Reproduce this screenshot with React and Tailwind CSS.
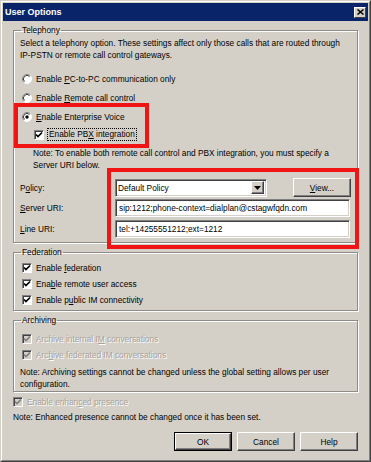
import React from 'react'

function Mn({ t }) {
  const i = t.indexOf('&')
  if (i < 0) return t
  return (
    <>
      {t.slice(0, i)}
      <u className="underline underline-offset-[1px]">{t[i + 1]}</u>
      {t.slice(i + 2)}
    </>
  )
}

function CheckBox({ disabled }) {
  return (
    <span
      className={
        disabled
          ? 'flex w-[10px] h-[10px] shrink-0 items-center justify-center border border-t-[#808080] border-l-[#808080] border-r-white border-b-white bg-[#d4d0c8] shadow-[inset_1px_1px_0_#404040]'
          : 'flex w-[10px] h-[10px] shrink-0 items-center justify-center border border-t-[#808080] border-l-[#808080] border-r-white border-b-white bg-white shadow-[inset_1px_1px_0_#404040]'
      }
    >
      <svg width="8" height="8" viewBox="0 0 8 8">
        <path d="M1 3.5 L3 5.5 L7 1.5" fill="none" stroke={disabled ? '#808080' : '#000'} strokeWidth="1.7" />
      </svg>
    </span>
  )
}

function Radio({ checked }) {
  return (
    <svg width="10" height="10" viewBox="0 0 10 10" className="shrink-0">
      <circle cx="5" cy="5" r="4.5" fill="#fff" />
      <path d="M8.2 1.8 A4.5 4.5 0 0 0 1.8 8.2" fill="none" stroke="#808080" strokeWidth="1" />
      <path d="M7.5 2.5 A3.5 3.5 0 0 0 2.5 7.5" fill="none" stroke="#404040" strokeWidth="1" />
      <path d="M1.8 8.2 A4.5 4.5 0 0 0 8.2 1.8" fill="none" stroke="#fff" strokeWidth="1" />
      {checked && <circle cx="5" cy="5" r="1.7" fill="#000" />}
    </svg>
  )
}

function CheckRow({ label, disabled, className = '' }) {
  return (
    <div className={`flex items-center gap-[4px] h-[16px] ${className}`}>
      <CheckBox disabled={disabled} />
      <span className={disabled ? 'text-[#a6a39c] [text-shadow:1px_1px_0_#fff]' : ''}>
        <Mn t={label} />
      </span>
    </div>
  )
}

function Button({ children, isDefault }) {
  return (
    <button
      className={
        isDefault
          ? 'w-[58px] h-[19px] border border-black bg-[#d4d0c8] p-0'
          : 'w-[58px] h-[19px] border border-t-white border-l-white border-r-[#404040] border-b-[#404040] bg-[#d4d0c8] shadow-[inset_-1px_-1px_0_#808080] p-0'
      }
    >
      {isDefault ? (
        <span className="flex h-full w-full items-center justify-center border border-t-white border-l-white border-r-[#404040] border-b-[#404040] shadow-[inset_-1px_-1px_0_#808080]">
          {children}
        </span>
      ) : (
        children
      )}
    </button>
  )
}

const sunken =
  'border border-t-[#808080] border-l-[#808080] border-r-white border-b-white bg-white shadow-[inset_1px_1px_0_#404040,inset_-1px_-1px_0_#d4d0c8]'

const group =
  'mx-[10px] border border-[#8e8c86] shadow-[inset_1px_1px_0_#fff,1px_1px_0_#fff] px-[6px]'

export default function App() {
  return (
    <div
      className="relative w-[371px] h-[462px] overflow-hidden border border-t-[#d4d0c8] border-l-[#d4d0c8] border-r-[#404040] border-b-[#404040] bg-[#d4d0c8] text-[8.3px] leading-[12px] text-black"
      style={{ fontFamily: '"Liberation Sans", Arial, sans-serif' }}
    >
      <div className="h-full border border-t-white border-l-white border-r-[#808080] border-b-[#808080] p-px">
        {/* title bar */}
        <div className="flex h-[18px] items-center justify-between bg-[#0a246a] pl-[2px] pr-[2px]">
          <span className="text-[9px] font-bold text-white">User Options</span>
          <span className="flex w-[12px] h-[11px] items-center justify-center border border-t-white border-l-white border-r-[#404040] border-b-[#404040] bg-[#d4d0c8]">
            <svg width="7" height="6" viewBox="0 0 7 6">
              <path d="M0.5 0.5 L6.5 5.5 M6.5 0.5 L0.5 5.5" stroke="#000" strokeWidth="1.5" />
            </svg>
          </span>
        </div>

        {/* Telephony */}
        <fieldset className={`${group} mt-[3px] pb-[4px]`}>
          <legend className="ml-px px-px">Telephony</legend>
          <div className="mt-px">
            Select a telephony option. These settings affect only those calls that are routed through
            <br />
            IP-PSTN or remote call control gateways.
          </div>
          <div className="mt-[8px] pl-[2px]">
            <div className="flex h-[19px] items-center gap-[4px]">
              <Radio />
              <span><Mn t="Enable &PC-to-PC communication only" /></span>
            </div>
            <div className="flex h-[19px] items-center gap-[4px]">
              <Radio />
              <span><Mn t="Enable &Remote call control" /></span>
            </div>
            <div className="flex h-[19px] items-center gap-[4px]">
              <Radio checked />
              <span><Mn t="&Enable Enterprise Voice" /></span>
            </div>
            <div className="flex h-[17px] items-center gap-[3px] pl-[12px]">
              <CheckBox />
              <span className="border border-dotted border-black px-px leading-[11px]">
                <Mn t="Enable PB&X integration" />
              </span>
            </div>
          </div>
          <div className="mt-[4px] pl-[13px]">
            Note: To enable both remote call control and PBX integration, you must specify a
            <br />
            Server URI below.
          </div>
          <div className="mt-[7px] flex h-[19px] items-center">
            <span className="w-[95px]"><Mn t="P&olicy:" /></span>
            <div className={`${sunken} flex h-[18px] w-[152px] items-center justify-between pl-[2px] pr-[2px]`}>
              <span>Default Policy</span>
              <span className="flex h-[13px] w-[13px] items-center justify-center border border-t-white border-l-white border-r-[#404040] border-b-[#404040] bg-[#d4d0c8] shadow-[inset_-1px_-1px_0_#808080]">
                <svg width="7" height="4" viewBox="0 0 7 4">
                  <path d="M0 0 H7 L3.5 4 Z" fill="#000" />
                </svg>
              </span>
            </div>
            <div className="ml-[26px]">
              <Button><Mn t="&View..." /></Button>
            </div>
          </div>
          <div className="mt-[2px] flex h-[18px] items-center">
            <span className="w-[95px]"><Mn t="&Server URI:" /></span>
            <div className={`${sunken} flex h-[18px] w-[235px] items-center pl-[3px]`}>
              sip:1212;phone-context=dialplan@cstagwfqdn.com
            </div>
          </div>
          <div className="mt-[3px] flex h-[18px] items-center">
            <span className="w-[95px]"><Mn t="&Line URI:" /></span>
            <div className={`${sunken} flex h-[18px] w-[235px] items-center pl-[3px]`}>
              tel:+14255551212;ext=1212
            </div>
          </div>
        </fieldset>

        {/* Federation */}
        <fieldset className={`${group} mt-[3px] pb-[2px]`}>
          <legend className="ml-px px-px">Federation</legend>
          <div className="mt-[2px] pl-[2px]">
            <CheckRow label="Enable &federation" />
            <CheckRow label="Ena&ble remote user access" />
            <CheckRow label="Enable p&ublic IM connectivity" />
          </div>
        </fieldset>

        {/* Archiving */}
        <fieldset className={`${group} mt-[3px] pb-px`}>
          <legend className="ml-px px-px">Archiving</legend>
          <div className="mt-[5px] pl-[2px]">
            <CheckRow disabled label="Archive internal I&M conversations" />
            <CheckRow disabled label="Arc&hive federated IM conversations" />
          </div>
          <div className="mt-[3px]">
            Note: Archiving settings cannot be changed unless the global setting allows per user
            <br />
            configuration.
          </div>
        </fieldset>

        <div className="mx-[10px]">
          <CheckRow disabled label="Enable enhan&ced presence" className="mt-[2px]" />
          <div className="mt-[1px]">Note: Enhanced presence cannot be changed once it has been set.</div>
          <div className="mt-[9px] flex justify-end gap-[5px]">
            <Button isDefault>OK</Button>
            <Button>Cancel</Button>
            <Button>Help</Button>
          </div>
        </div>
      </div>

      {/* red annotation boxes */}
      <div className="absolute left-[13px] top-[102px] w-[135px] h-[45px] border-[4px] border-[#f01414]" />
      <div className="absolute left-[106px] top-[167px] w-[252px] h-[81px] border-[4px] border-[#f01414]" />
    </div>
  )
}
